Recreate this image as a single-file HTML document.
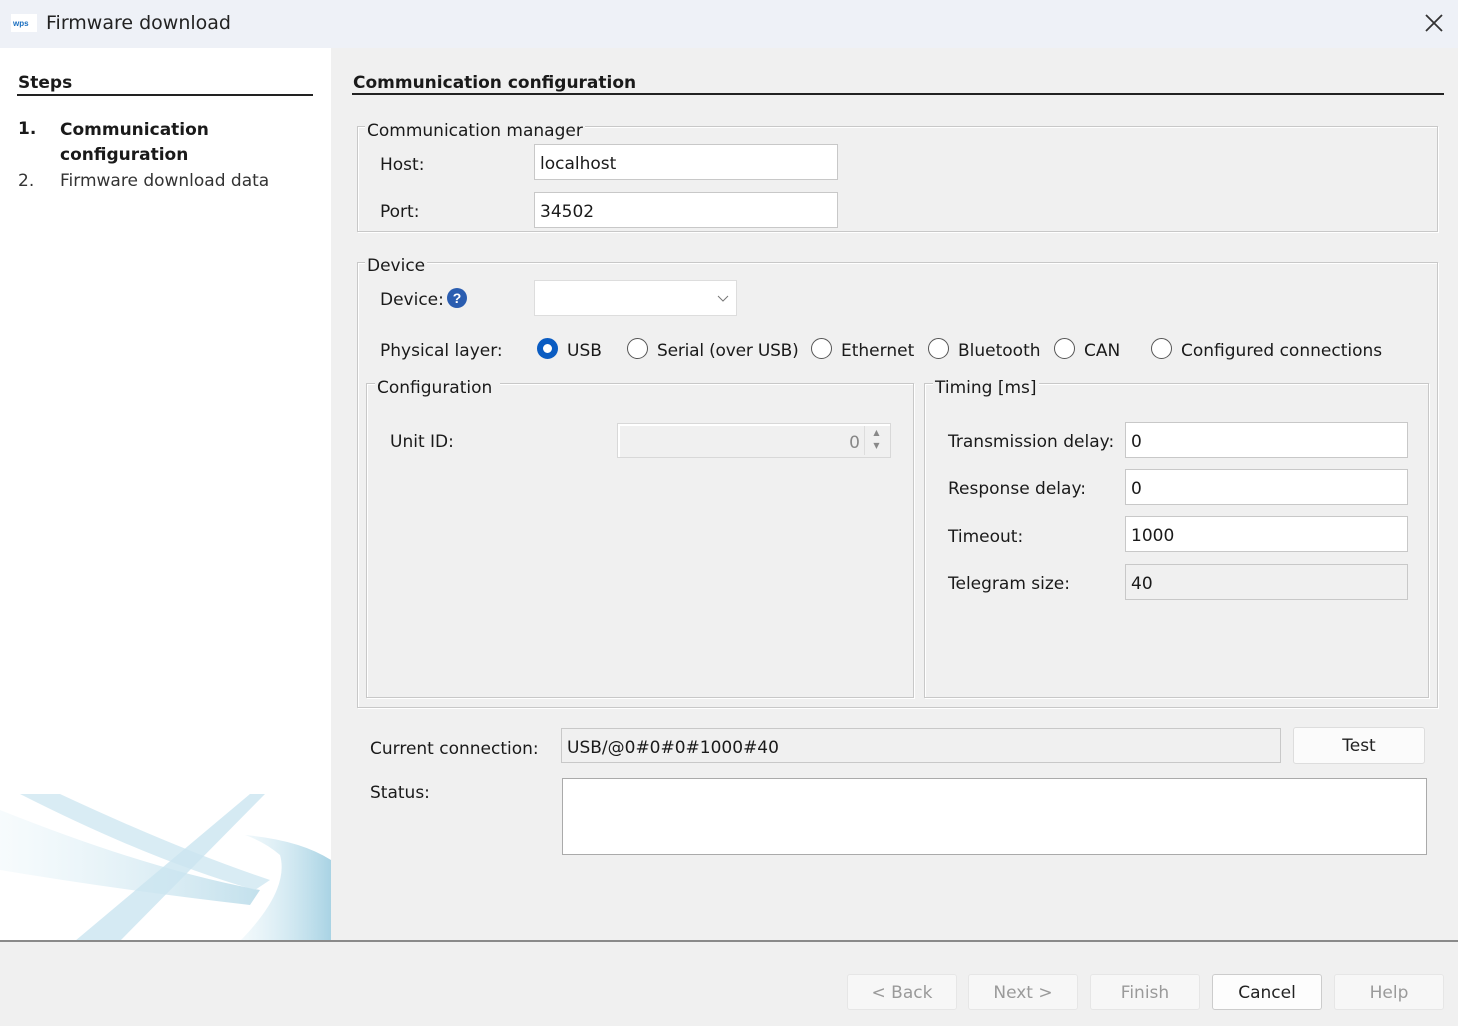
<!DOCTYPE html>
<html><head><meta charset="utf-8"><style>
*{box-sizing:border-box;margin:0;padding:0}
body{width:1458px;height:1026px;background:#f0f0f0;font-family:"DejaVu Sans","Liberation Sans",sans-serif;font-size:16px;color:#1a1a1a;position:relative;overflow:hidden}
.a{position:absolute;white-space:nowrap}
.title{left:0;top:0;width:1458px;height:48px;background:#eef1f7}
.side{left:0;top:48px;width:331px;height:893px;background:#fff}
.fs{position:absolute;border:1px solid #c8c8c8;box-shadow:inset 1px 1px 0 #fff,1px 1px 0 #fff}
.leg{position:absolute;background:#f0f0f0;padding:0 2px;font-size:17px;line-height:20px}
.inp{position:absolute;background:#fff;border:1px solid #c8c8c8;height:36px;font-size:17px;padding:9px 5px 0;line-height:20px}
.dis{background:#f0f0f0}
.lbl{position:absolute;font-size:17px;line-height:20px;white-space:nowrap}
.radio{position:absolute;width:21px;height:21px;border:1.5px solid #555;border-radius:50%;background:#fff}
.btn{position:absolute;top:974px;width:110px;height:36px;border:1px solid #e6e6e6;border-radius:3px;background:#f7f7f7;color:#9a9a9a;font-size:17px;text-align:center;line-height:36px}
</style></head><body>
<div class="a title"></div>
<svg class="a" style="left:11px;top:14px" width="26" height="18"><rect width="26" height="18" fill="#fff"/><text x="2" y="12" font-size="8" font-weight="bold" fill="#1b6fc0" font-family="Liberation Sans">wps</text></svg>
<div class="a" style="left:46px;top:12px;font-size:19px;color:#222">Firmware download</div>
<svg class="a" style="left:1424px;top:13px" width="20" height="20"><path d="M2 2L18 18M18 2L2 18" stroke="#333" stroke-width="1.8"/></svg>
<div class="a side"></div>
<svg class="a" style="left:0;top:780px" width="331" height="161">
<defs><linearGradient id="g" x1="0" x2="1"><stop offset="0" stop-color="#d8edf5" stop-opacity=".3"/><stop offset="1" stop-color="#a9d3e4"/></linearGradient></defs>
<path d="M0 30 Q150 90 260 110 L250 125 Q120 110 0 90Z" fill="url(#g)" opacity=".7"/>
<path d="M20 14 L60 14 Q180 70 270 100 L255 110 Q150 80 20 14Z" fill="#cfe7f1" opacity=".8"/>
<path d="M75 161 L250 14 L265 14 L120 161Z" fill="#cbe5f0" opacity=".8"/>
<path d="M245 55 Q300 60 331 80 L331 161 L240 161 Q290 110 280 75 Q265 62 245 55Z" fill="url(#g)"/>
</svg>
<div class="a" style="left:0;top:940px;width:1458px;height:2px;background:#8a8a8a"></div>

<div class="a" style="left:18px;top:73px;font-weight:bold;font-size:17px">Steps</div>
<div class="a" style="left:17px;top:94px;width:296px;height:2px;background:#222"></div>
<div class="a" style="left:18px;top:119px;font-weight:bold;font-size:17px">1.</div>
<div class="a" style="left:60px;top:118px;font-weight:bold;font-size:17px;line-height:25px">Communication<br>configuration</div>
<div class="a" style="left:18px;top:171px;font-size:17px;color:#333">2.</div>
<div class="a" style="left:60px;top:171px;font-size:17px;color:#333">Firmware download data</div>

<div class="a" style="left:353px;top:73px;font-weight:bold;font-size:17px">Communication configuration</div>
<div class="a" style="left:352px;top:93px;width:1092px;height:2px;background:#222"></div>

<div class="fs" style="left:357px;top:126px;width:1081px;height:106px"></div>
<div class="leg" style="left:365px;top:121px">Communication manager</div>
<div class="lbl" style="left:380px;top:155px">Host:</div>
<div class="inp" style="left:534px;top:144px;width:304px">localhost</div>
<div class="lbl" style="left:380px;top:202px">Port:</div>
<div class="inp" style="left:534px;top:192px;width:304px">34502</div>

<div class="fs" style="left:357px;top:262px;width:1081px;height:446px"></div>
<div class="leg" style="left:365px;top:256px">Device</div>
<div class="lbl" style="left:380px;top:290px">Device:</div>
<svg class="a" style="left:446px;top:287px" width="22" height="22"><circle cx="11" cy="11" r="10" fill="#2a5db0"/><text x="11" y="16" text-anchor="middle" font-size="14" font-weight="bold" fill="#fff" font-family="Liberation Sans">?</text></svg>
<div class="inp" style="left:534px;top:280px;width:203px;border-color:#ddd"></div>
<svg class="a" style="left:717px;top:295px" width="12" height="8"><path d="M1 1L6 6L11 1" stroke="#777" fill="none"/></svg>
<div class="lbl" style="left:380px;top:341px">Physical layer:</div>
<div class="radio" style="left:537px;top:338px;border:6px solid #0a5cc2"></div>
<div class="lbl" style="left:567px;top:341px">USB</div>
<div class="radio" style="left:627px;top:338px"></div>
<div class="lbl" style="left:657px;top:341px;letter-spacing:-0.2px">Serial (over USB)</div>
<div class="radio" style="left:811px;top:338px"></div>
<div class="lbl" style="left:841px;top:341px">Ethernet</div>
<div class="radio" style="left:928px;top:338px"></div>
<div class="lbl" style="left:958px;top:341px">Bluetooth</div>
<div class="radio" style="left:1054px;top:338px"></div>
<div class="lbl" style="left:1084px;top:341px">CAN</div>
<div class="radio" style="left:1151px;top:338px"></div>
<div class="lbl" style="left:1181px;top:341px">Configured connections</div>

<div class="fs" style="left:366px;top:383px;width:548px;height:315px"></div>
<div class="leg" style="left:375px;top:378px;padding-right:8px">Configuration</div>
<div class="lbl" style="left:390px;top:432px">Unit ID:</div>
<div class="inp dis" style="left:617px;top:423px;width:274px;height:35px;text-align:right;padding-right:30px;color:#888;border-color:#d8d8d8;box-shadow:inset 2px 2px 0 #fff">0</div>
<div class="a" style="left:864px;top:426px;width:24px;height:29px;border-left:1px solid #ddd;font-size:8px;color:#888;text-align:center;line-height:13px">▲<br>▼</div>

<div class="fs" style="left:924px;top:383px;width:505px;height:315px"></div>
<div class="leg" style="left:933px;top:378px">Timing [ms]</div>
<div class="lbl" style="left:948px;top:432px">Transmission delay:</div>
<div class="inp" style="left:1125px;top:422px;width:283px">0</div>
<div class="lbl" style="left:948px;top:479px">Response delay:</div>
<div class="inp" style="left:1125px;top:469px;width:283px">0</div>
<div class="lbl" style="left:948px;top:527px">Timeout:</div>
<div class="inp" style="left:1125px;top:516px;width:283px">1000</div>
<div class="lbl" style="left:948px;top:574px">Telegram size:</div>
<div class="inp dis" style="left:1125px;top:564px;width:283px">40</div>

<div class="lbl" style="left:370px;top:739px">Current connection:</div>
<div class="inp dis" style="left:561px;top:728px;width:720px;height:35px">USB/@0#0#0#1000#40</div>
<div class="btn" style="left:1293px;top:727px;width:132px;height:37px;background:#fbfbfb;color:#222;border-color:#ddd">Test</div>
<div class="lbl" style="left:370px;top:783px">Status:</div>
<div class="inp" style="left:562px;top:778px;width:865px;height:77px;border-color:#aaa"></div>

<div class="btn" style="left:847px">&lt; Back</div>
<div class="btn" style="left:968px">Next &gt;</div>
<div class="btn" style="left:1090px">Finish</div>
<div class="btn" style="left:1212px;background:#fdfdfd;color:#222;border-color:#ccc">Cancel</div>
<div class="btn" style="left:1334px">Help</div>
</body></html>
